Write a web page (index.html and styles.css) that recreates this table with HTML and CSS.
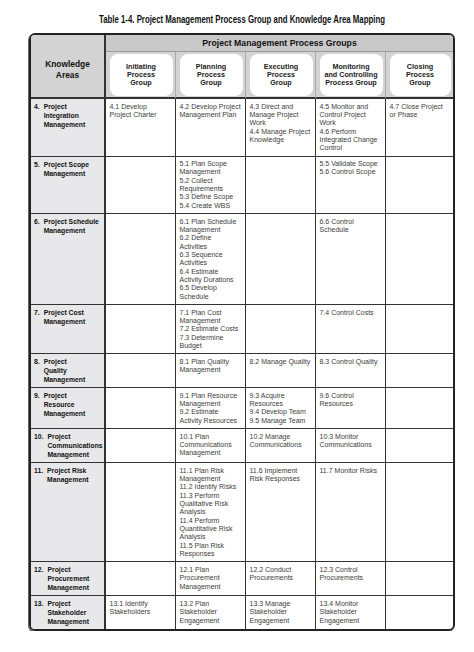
FILE: index.html
```html
<!DOCTYPE html>
<html lang="en">
<head>
<meta charset="utf-8">
<title>Table 1-4</title>
<link rel="stylesheet" href="styles.css">
</head>
<body>
<div class="page">
  <h1 class="title"><span>Table 1-4. Project Management Process Group and Knowledge Area Mapping</span></h1>
  <div class="table">
    <div class="ka-head">Knowledge<br>Areas</div>
    <div class="pg-head">Project Management Process Groups</div>
    <div class="sub"><div class="box">Initiating<br>Process<br>Group</div></div>
    <div class="sub"><div class="box">Planning<br>Process<br>Group</div></div>
    <div class="sub"><div class="box">Executing<br>Process<br>Group</div></div>
    <div class="sub"><div class="box">Monitoring<br>and Controlling<br>Process Group</div></div>
    <div class="sub end"><div class="box">Closing<br>Process<br>Group</div></div>

    <div class="ka"><span class="n">4.</span><span class="t">Project<br>Integration<br>Management</span></div>
    <div class="c">4.1 Develop<br>Project Charter</div>
    <div class="c">4.2 Develop Project<br>Management Plan</div>
    <div class="c">4.3 Direct and<br>Manage Project<br>Work<br>4.4 Manage Project<br>Knowledge</div>
    <div class="c">4.5 Monitor and<br>Control Project<br>Work<br>4.6 Perform<br>Integrated Change<br>Control</div>
    <div class="c end">4.7 Close Project<br>or Phase</div>

    <div class="ka"><span class="n">5.</span><span class="t">Project Scope<br>Management</span></div>
    <div class="c"></div>
    <div class="c">5.1 Plan Scope<br>Management<br>5.2 Collect<br>Requirements<br>5.3 Define Scope<br>5.4 Create WBS</div>
    <div class="c"></div>
    <div class="c">5.5 Validate Scope<br>5.6 Control Scope</div>
    <div class="c end"></div>

    <div class="ka"><span class="n">6.</span><span class="t">Project Schedule<br>Management</span></div>
    <div class="c"></div>
    <div class="c">6.1 Plan Schedule<br>Management<br>6.2 Define<br>Activities<br>6.3 Sequence<br>Activities<br>6.4 Estimate<br>Activity Durations<br>6.5 Develop<br>Schedule</div>
    <div class="c"></div>
    <div class="c">6.6 Control<br>Schedule</div>
    <div class="c end"></div>

    <div class="ka"><span class="n">7.</span><span class="t">Project Cost<br>Management</span></div>
    <div class="c"></div>
    <div class="c">7.1 Plan Cost<br>Management<br>7.2 Estimate Costs<br>7.3 Determine<br>Budget</div>
    <div class="c"></div>
    <div class="c">7.4 Control Costs</div>
    <div class="c end"></div>

    <div class="ka"><span class="n">8.</span><span class="t">Project<br>Quality<br>Management</span></div>
    <div class="c"></div>
    <div class="c">8.1 Plan Quality<br>Management</div>
    <div class="c">8.2 Manage Quality</div>
    <div class="c">8.3 Control Quality</div>
    <div class="c end"></div>

    <div class="ka"><span class="n">9.</span><span class="t">Project<br>Resource<br>Management</span></div>
    <div class="c"></div>
    <div class="c">9.1 Plan Resource<br>Management<br>9.2 Estimate<br>Activity Resources</div>
    <div class="c">9.3 Acquire<br>Resources<br>9.4 Develop Team<br>9.5 Manage Team</div>
    <div class="c">9.6 Control<br>Resources</div>
    <div class="c end"></div>

    <div class="ka"><span class="n">10.</span><span class="t">Project<br>Communications<br>Management</span></div>
    <div class="c"></div>
    <div class="c">10.1 Plan<br>Communications<br>Management</div>
    <div class="c">10.2 Manage<br>Communications</div>
    <div class="c">10.3 Monitor<br>Communications</div>
    <div class="c end"></div>

    <div class="ka"><span class="n">11.</span><span class="t">Project Risk<br>Management</span></div>
    <div class="c"></div>
    <div class="c">11.1 Plan Risk<br>Management<br>11.2 Identify Risks<br>11.3 Perform<br>Qualitative Risk<br>Analysis<br>11.4 Perform<br>Quantitative Risk<br>Analysis<br>11.5 Plan Risk<br>Responses</div>
    <div class="c">11.6 Implement<br>Risk Responses</div>
    <div class="c">11.7 Monitor Risks</div>
    <div class="c end"></div>

    <div class="ka"><span class="n">12.</span><span class="t">Project<br>Procurement<br>Management</span></div>
    <div class="c"></div>
    <div class="c">12.1 Plan<br>Procurement<br>Management</div>
    <div class="c">12.2 Conduct<br>Procurements</div>
    <div class="c">12.3 Control<br>Procurements</div>
    <div class="c end"></div>

    <div class="ka last"><span class="n">13.</span><span class="t">Project<br>Stakeholder<br>Management</span></div>
    <div class="c last">13.1 Identify<br>Stakeholders</div>
    <div class="c last">13.2 Plan<br>Stakeholder<br>Engagement</div>
    <div class="c last">13.3 Manage<br>Stakeholder<br>Engagement</div>
    <div class="c last">13.4 Monitor<br>Stakeholder<br>Engagement</div>
    <div class="c end last"></div>
  </div>
</div>
</body>
</html>
```

FILE: styles.css
```css
* { box-sizing: border-box; }

body {
  margin: 0;
  background: #ffffff;
}

.page {
  width: 455px;
  padding: 12px 0 0 29px;
  font-family: "Liberation Sans", Arial, sans-serif;
}

.title {
  margin: 0 0 7px;
  font-size: 10.5px;
  line-height: 14px;
  font-weight: bold;
  color: #111;
  text-align: center;
  white-space: nowrap;
}

.title span {
  display: inline-block;
  transform: scaleX(0.745);
  transform-origin: center;
}

.table {
  display: grid;
  grid-template-columns: 75px 70px 70px 70px 70px 67px;
  width: 426px;
  border: 2px solid #222;
  border-radius: 6px;
  overflow: hidden;
  box-shadow: -1px 1px 0 #666;
}

.ka-head {
  grid-row: 1 / 3;
  background: #d3d3d3;
  border-right: 2px solid #333;
  border-bottom: 2px solid #333;
  display: flex;
  align-items: center;
  justify-content: center;
  text-align: center;
  padding-top: 8px;
  font-weight: bold;
  font-size: 8.4px;
  line-height: 11px;
  color: #111;
}

.pg-head {
  grid-column: 2 / 7;
  height: 17px;
  background: #c9c9c9;
  border-bottom: 1px solid #9a9a9a;
  text-align: center;
  font-weight: bold;
  font-size: 8.7px;
  line-height: 16px;
  color: #111;
}

.sub {
  height: 47px;
  background: #d3d3d3;
  border-right: 1px solid #aaa;
  border-bottom: 2px solid #333;
  padding: 2px 2.5px 1px 3.5px;
}

.box {
  height: 100%;
  background: #fff;
  border-radius: 8px;
  display: flex;
  align-items: center;
  justify-content: center;
  text-align: center;
  font-weight: bold;
  font-size: 7.2px;
  line-height: 8px;
  color: #1a1a1a;
}

.ka {
  display: flex;
  gap: 4px;
  background: #e8e8ea;
  border-right: 2px solid #333;
  border-bottom: 1px solid #333;
  padding: 3px 2px 3px 3px;
  font-weight: bold;
  font-size: 6.8px;
  line-height: 9px;
  color: #111;
  white-space: nowrap;
}

.c {
  border-right: 1px solid #333;
  border-bottom: 1px solid #333;
  padding: 3.5px 2px 3px 3.5px;
  font-size: 7px;
  line-height: 8.35px;
  color: #3d3d3d;
  white-space: nowrap;
}

.end { border-right: none; }
.last { border-bottom: none; }
```
